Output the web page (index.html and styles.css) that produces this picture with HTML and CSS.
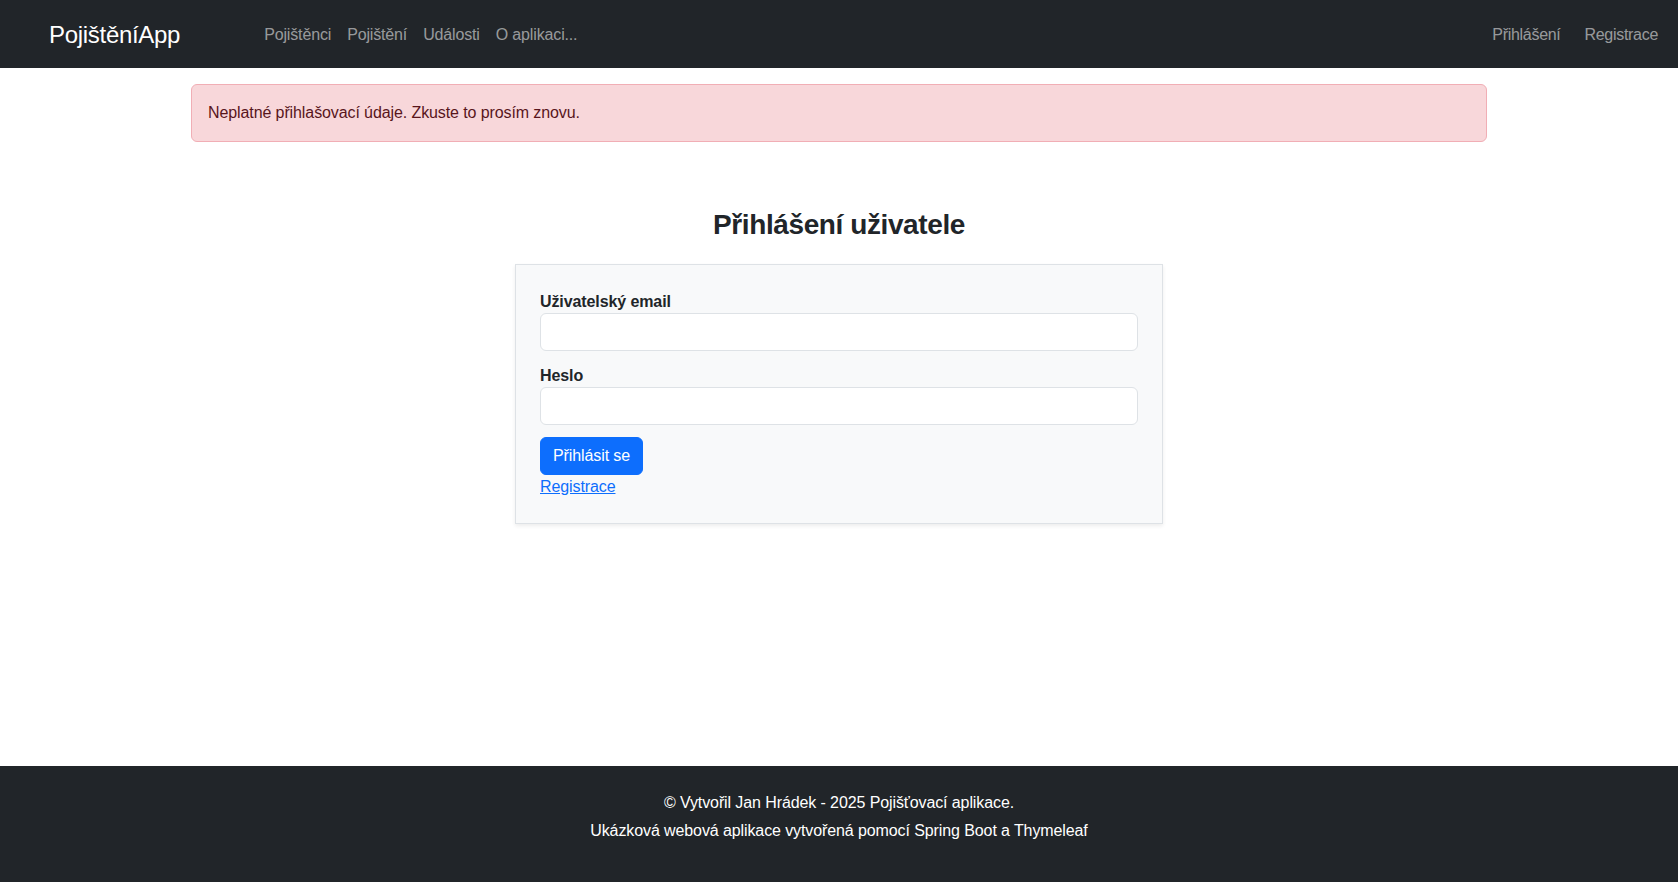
FILE: index.html
```html
<!DOCTYPE html>
<html lang="cs">
<head>
<meta charset="utf-8">
<title>Přihlášení – PojištěníApp</title>
<link rel="stylesheet" href="styles.css">
</head>
<body>
<nav class="navbar">
  <a class="brand" href="#">PojištěníApp</a>
  <ul class="nav nav-main">
    <li><a class="nav-link" href="#">Pojištěnci</a></li>
    <li><a class="nav-link" href="#">Pojištění</a></li>
    <li><a class="nav-link" href="#">Události</a></li>
    <li><a class="nav-link" href="#">O aplikaci...</a></li>
  </ul>
  <ul class="nav nav-right">
    <li><a class="nav-link" href="#">Přihlášení</a></li>
    <li><a class="nav-link" href="#">Registrace</a></li>
  </ul>
</nav>

<main class="main">
  <div class="container">
    <div class="alert">Neplatné přihlašovací údaje. Zkuste to prosím znovu.</div>
    <h2 class="title">Přihlášení uživatele</h2>
    <form class="login-card">
      <div class="field">
        <label class="label" for="email">Uživatelský email</label>
        <input class="input" id="email" type="email">
      </div>
      <div class="field">
        <label class="label" for="password">Heslo</label>
        <input class="input" id="password" type="password">
      </div>
      <button class="btn" type="button">Přihlásit se</button>
      <div class="register"><a class="link" href="#">Registrace</a></div>
    </form>
  </div>
</main>

<footer class="footer">
  <p class="footer-line">© Vytvořil Jan Hrádek - 2025 Pojišťovací aplikace.</p>
  <p class="footer-line">Ukázková webová aplikace vytvořená pomocí Spring Boot a Thymeleaf</p>
</footer>
</body>
</html>
```
FILE: styles.css
```css
* { box-sizing: border-box; }

html, body { height: 100%; }

body {
  margin: 0;
  min-height: 100vh;
  display: flex;
  flex-direction: column;
  font-family: "Liberation Sans", Arial, sans-serif;
  font-size: 16px;
  line-height: 24px;
  letter-spacing: -0.1px;
  color: #212529;
  background: #fff;
}

.navbar {
  height: 68px;
  flex: 0 0 68px;
  background: #212529;
  display: flex;
  align-items: center;
  padding: 1px 12px 0 49px;
}

.brand {
  color: #fff;
  text-decoration: none;
  font-size: 24px;
  line-height: 36px;
  letter-spacing: -0.3px;
  margin-right: 76px;
}

.nav {
  list-style: none;
  margin: 0;
  padding: 0;
  display: flex;
}

.nav-right { margin-left: auto; }
.nav-right li + li { margin-left: 8px; }

.nav-link {
  display: block;
  padding: 8px;
  color: rgba(255, 255, 255, 0.55);
  text-decoration: none;
  letter-spacing: -0.15px;
}

.nav-right .nav-link { letter-spacing: -0.3px; }

.main { flex: 1 0 auto; }

.container {
  width: 1296px;
  margin: 0 auto;
}

.alert {
  margin-top: 16px;
  padding: 16px;
  border: 1px solid #f1aeb5;
  border-radius: 6px;
  background: #f8d7da;
  color: #58151c;
}

.title {
  margin: 66px 0 22px;
  text-align: center;
  font-size: 28px;
  line-height: 1.2;
  font-weight: 700;
  letter-spacing: -0.4px;
}

.login-card {
  width: 648px;
  margin: 0 auto;
  padding: 24px;
  background: #f8f9fa;
  border: 1px solid #dee2e6;
  box-shadow: 0 2px 4px rgba(0, 0, 0, 0.075);
}

.field { margin-bottom: 12px; }

.label {
  display: block;
  font-weight: 700;
  padding-top: 1px;
  margin-bottom: -1px;
}

.input {
  display: block;
  width: 100%;
  height: 38px;
  padding: 6px 12px;
  border: 1px solid #dee2e6;
  border-radius: 6px;
  background: #fff;
  font: inherit;
}

.btn {
  display: inline-block;
  height: 38px;
  padding: 6px 12px;
  border: 1px solid #0d6efd;
  border-radius: 6px;
  background: #0d6efd;
  color: #fff;
  font: inherit;
  letter-spacing: -0.1px;
  line-height: 24px;
}

.link { color: #0d6efd; text-decoration: underline; }

.footer {
  background: #212529;
  color: #fff;
  text-align: center;
  padding: 25px 0 39px;
}

.footer-line { margin: 0 0 4px; }
.footer-line:last-child { margin-bottom: 0; }
```
